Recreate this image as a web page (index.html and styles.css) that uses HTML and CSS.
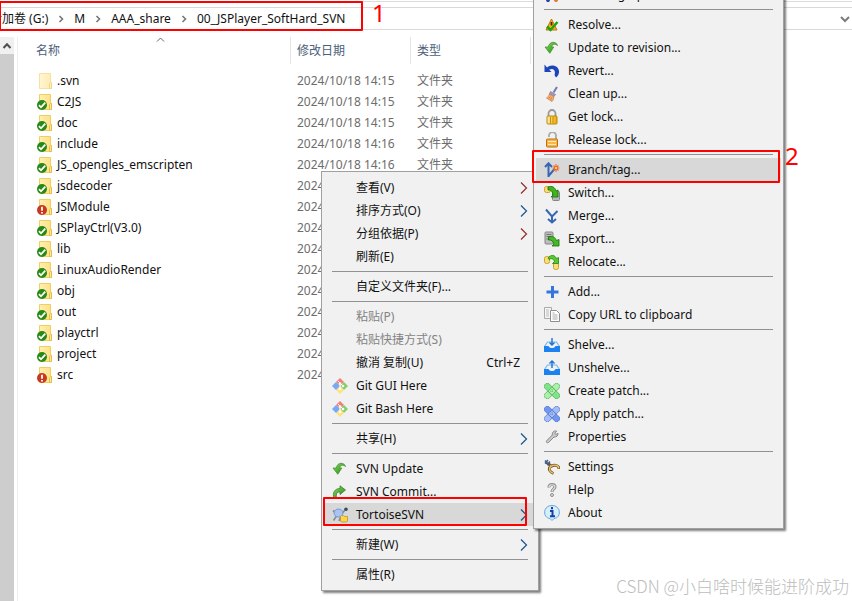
FILE: index.html
```html
<!DOCTYPE html>
<html lang="zh-CN">
<head>
  <meta charset="UTF-8">
  <meta name="viewport" content="width=device-width, initial-scale=1.0">
  <title>00_JSPlayer_SoftHard_SVN</title>
  <link rel="stylesheet" href="styles.css">
</head>
<body>
  <svg class="sprite" aria-hidden="true">
    <defs>
      <linearGradient id="gold" x1="0" x2="1"><stop offset="0" stop-color="#fff0b0"/><stop offset="1" stop-color="#eda800"/></linearGradient>
      <linearGradient id="greenFill" x1="0" y1="0" x2="1" y2="1"><stop offset="0" stop-color="#8ce05a"/><stop offset="1" stop-color="#16850c"/></linearGradient>
      <linearGradient id="folderFill" x1="0" x2="1"><stop offset="0" stop-color="#fff0b4"/><stop offset="1" stop-color="#ffdf80"/></linearGradient>
    </defs>
    <symbol id="folder" viewBox="0 0 16 16">
      <path d="M2.5.5h11v9h1v6h-12z" fill="url(#folderFill)" stroke="#efcf62"/>
      <path d="M12.5 15.5v-5l1-1h1v6z" fill="#ffe9a0" stroke="#e5bc45"/>
    </symbol>
    <symbol id="ok" viewBox="0 0 10 10">
      <circle cx="5" cy="5" r="5" fill="#278a16"/>
      <path d="M2 5.2l2 2.1L8.3 2.6" fill="none" stroke="#fff" stroke-width="1.8"/>
    </symbol>
    <symbol id="modified" viewBox="0 0 10 10">
      <circle cx="5" cy="5" r="5" fill="#c8371f"/>
      <path d="M5 1.8v4M5 6.9v1.5" stroke="#fff" stroke-width="1.8"/>
    </symbol>
    <symbol id="crumb" viewBox="0 0 6 8"><path d="M1.5 1l3 3-3 3" fill="none" stroke="#777" stroke-width="1.6"/></symbol>
    <symbol id="arrow" viewBox="0 0 8 12"><path d="M1 .5L6.500 6 1 11.500" fill="none" stroke="currentColor" stroke-width="1.200"/></symbol>

    <symbol id="git" viewBox="0 0 16 16">
      <path d="M8 0l4 4-4 4-4-4z" fill="#f47f7a"/>
      <path d="M12 4l4 4-4 4-4-4z" fill="#86cf68"/>
      <path d="M8 8l4 4-4 4-4-4z" fill="#ffe27c"/>
      <path d="M4 4l4 4-4 4-4-4z" fill="#79a8f5"/>
      <path d="M6 3l5 5M8 5.500v6" stroke="#fff" fill="none"/>
      <circle cx="8" cy="5.500" r="1.300" fill="#fff"/><circle cx="11" cy="8" r="1.300" fill="#fff"/><circle cx="8" cy="11" r="1.300" fill="#fff"/>
    </symbol>
    <symbol id="update" viewBox="0 0 16 16">
      <path d="M13.500 5.500C12.500 1.500 5.500.5 4.300 7H1l4.800 6.300L9.800 7H7.600c.5-2.800 3.200-3.800 5.900-1.500z" fill="url(#greenFill)" stroke="#4a8f3c" stroke-width=".8"/>
    </symbol>
    <symbol id="commit" viewBox="0 0 16 16">
      <path d="M2 14.500C0 8.500 3 4.500 8 4.500V1.800L13.500 6 8 10.600V8C5 7.500 3.800 10 4.500 13.500z" fill="url(#greenFill)" stroke="#46793f" stroke-width=".8"/>
    </symbol>
    <symbol id="tortoise" viewBox="0 0 16 16">
      <path d="M10 6.500l3-3.500M4.500 9l-3 4.500M1 3.500L4 6M9 9l-2 5" stroke="#8b9099" stroke-width="1.800"/>
      <circle cx="14" cy="2.300" r="1.800" fill="#33505f"/>
      <ellipse cx="6.500" cy="6" rx="4.400" ry="4" fill="#a8c4f5" stroke="#7496d8"/>
      <path d="M8.500 9.500l1-1h2l1 1h3v4.500l-1 1h-5l-1-1z" fill="#f8d64f" stroke="#c19322" stroke-width=".8"/>
    </symbol>

    <symbol id="graph" viewBox="0 0 16 16">
      <path d="M4 1v14M4 10l7-5" stroke="#2c4fa5" stroke-width="2"/>
      <circle cx="12" cy="13" r="2" fill="#e8722c"/><circle cx="4" cy="13" r="2" fill="#2c3fa5"/>
    </symbol>
    <symbol id="resolve" viewBox="0 0 16 16">
      <path d="M7.500 2l5.500 11H2z" fill="#f6b51c" stroke="#c9700d"/>
      <path d="M7.500 5v3.500" stroke="#4a2a00" stroke-width="1.800"/>
      <path d="M3 9.500l3.500 3.500L13.500 5" fill="none" stroke="#1ea30f" stroke-width="2.500"/>
    </symbol>
    <symbol id="revert" viewBox="0 0 16 16">
      <path d="M.5 1.500v7.500h7L5.200 6.700c3.300-2 7-.2 5.300 5.300l1.500 2.500C17.500 10 15 3 9 2.500 6.500 2.300 4.500 3 3 4.500z" fill="#1d45ba"/>
    </symbol>
    <symbol id="clean" viewBox="0 0 16 16">
      <path d="M13 1L9.500 6.500" stroke="#7777a8" stroke-width="2"/>
      <path d="M6.500 5.500l5 3-1.500 2-4.500-2.500z" fill="#9a9dc5" stroke="#7377a5" stroke-width=".7"/>
      <path d="M5.300 8l4.500 2.500c0 2-.5 3.500-1.800 5L2.500 12C4 11 5 10 5.300 8z" fill="#f3b16c" stroke="#c97535" stroke-width=".7"/>
      <path d="M4.500 12.500l2-2M6.500 13.800l1.500-2.500" stroke="#db6640" stroke-width=".8"/>
    </symbol>
    <symbol id="lock" viewBox="0 0 16 16">
      <path d="M4.500 8V4.500a3.500 3.500 0 0 1 7 0V8" fill="none" stroke="#999" stroke-width="1.800"/>
      <rect x="3" y="7" width="10" height="8" rx="1" fill="url(#gold)" stroke="#b58709"/>
      <path d="M6.500 8v6.500M9 8v6.500" stroke="#c98d00"/>
    </symbol>
    <symbol id="unlock" viewBox="0 0 16 16">
      <path d="M5 5V3.500a3.500 3.500 0 0 1 7 0V8" fill="none" stroke="#aaa" stroke-width="1.800"/>
      <rect x="2.500" y="7" width="11" height="8" rx="1" fill="#f8b54a" stroke="#bd6e0e"/>
      <path d="M4 9.500h8M4 12.500h8" stroke="#ffe8b8"/>
    </symbol>
    <symbol id="branch" viewBox="0 0 16 16">
      <path d="M4.500 15V2M1 5l3.500-3.700L8 5M4.500 14l6-7" fill="none" stroke="#3767b2" stroke-width="2"/>
      <path d="M12 2v8M8.500 6h7M9.500 3.500l5 5M14.500 3.500l-5 5" stroke="#ef6b34" stroke-width="1.100"/>
      <circle cx="12" cy="6" r="1.700" fill="#ffd34d" stroke="#e9582b" stroke-width=".8"/>
    </symbol>
    <symbol id="switch" viewBox="0 0 16 16">
      <rect x=".5" y="1.500" width="6" height="6" rx="2" fill="#f9df75" stroke="#c7a32b"/>
      <rect x="8.500" y="6.500" width="7" height="9" rx="1" fill="#b9b9b9" stroke="#858585"/>
      <path d="M4 2c4-1.500 7 0 8 4l2-1v7H7l2-2C8.500 6.500 7 4.500 4 5z" fill="#3fb51f" stroke="#176c08" stroke-width=".8"/>
    </symbol>
    <symbol id="merge" viewBox="0 0 16 16">
      <path d="M2 1.500l6 7L13.500 3M8 8v6M4 11l4 3.500 4-3.500" fill="none" stroke="#3767b2" stroke-width="2"/>
    </symbol>
    <symbol id="export" viewBox="0 0 16 16">
      <rect x="1" y="1" width="8" height="12" rx="1" fill="#bdbdbd" stroke="#858585"/>
      <path d="M2.500 3.500h5M2.500 5.500h5M2.500 8h3" stroke="#747474"/>
      <path d="M4.500 6c4-1.500 7 .5 8 3.500l2.500-1v6.500H8l2-2C9.500 10.500 7.500 8.500 4.500 9z" fill="#43ba26" stroke="#176c08" stroke-width=".8"/>
    </symbol>
    <symbol id="relocate" viewBox="0 0 16 16">
      <rect x=".5" y="2.500" width="5" height="7" rx="2" fill="#f9df75" stroke="#c7a32b"/>
      <rect x="9.500" y="7.500" width="5" height="8" rx="2" fill="#f9df75" stroke="#c7a32b"/>
      <path d="M4 4c3-4 7-3 8.500.5l2-1v6H8.500l2-2C9.500 4.500 7 4 5 5.500z" fill="#55c832" stroke="#238412" stroke-width=".8"/>
    </symbol>
    <symbol id="add" viewBox="0 0 16 16"><path d="M8.500 2v12M2.500 8h12" stroke="#3476db" stroke-width="3"/></symbol>
    <symbol id="copy" viewBox="0 0 16 16">
      <path d="M.5.500h7v11h-7z" fill="#f6f6f6" stroke="#aaa"/>
      <path d="M2 3h3M2 5h3M2 7h3M2 9h3" stroke="#bbb"/>
      <path d="M6.500 3.500h6l3 3v8h-9z" fill="#fff" stroke="#8e8e8e"/>
      <path d="M8.500 6h2M8.500 8h5M8.500 10h5M8.500 12h5" stroke="#aaa"/>
    </symbol>
    <symbol id="shelve" viewBox="0 0 16 16">
      <path d="M.5 9.500L3.500 5h9l3 4.500" fill="none" stroke="#79b7ee" stroke-width="1.200"/>
      <path d="M0 9h4.500c1 2.800 6 2.800 7 0H16v6H0z" fill="#1b82f0"/>
      <path d="M8 1v7M5.500 5.500L8 8l2.500-2.500" fill="none" stroke="#1b73d2" stroke-width="1.400"/>
    </symbol>
    <symbol id="unshelve" viewBox="0 0 16 16">
      <path d="M.5 9.500L3.500 5h9l3 4.500" fill="none" stroke="#79b7ee" stroke-width="1.200"/>
      <path d="M0 9h4.500c1 2.800 6 2.800 7 0H16v6H0z" fill="#1b82f0"/>
      <path d="M8 8V1M5.500 3.500L8 1l2.500 2.500" fill="none" stroke="#1b73d2" stroke-width="1.400"/>
    </symbol>
    <symbol id="patch" viewBox="0 0 16 16">
      <g stroke="currentColor" stroke-width=".7">
        <rect x="-1.500" y="5" width="19" height="6" rx="2" transform="rotate(-45 8 8)" fill="var(--patch-light)"/>
        <rect x="-1.500" y="5" width="19" height="6" rx="2" transform="rotate(45 8 8)" fill="var(--patch)"/>
        <path d="M8 4l4 4-4 4-4-4z" fill="var(--patch-light)"/>
        <path d="M8 6v4M6 8h4" stroke-dasharray="1 1"/>
      </g>
    </symbol>
    <symbol id="wrench" viewBox="0 0 16 16">
      <path d="M9.500 2.500c1.300-.8 2.500-.7 3.200-.4L10.800 4l1 1.500 2.200-1.200c.2 2.500-1.500 4-4 3.700l-5.500 5.500c-1.300 1-2.800-.5-1.800-1.800L8.300 6c-.2-1.500.3-2.700 1.200-3.500z" fill="#c9c9c9" stroke="#8b8b8b"/>
    </symbol>
    <symbol id="settings" viewBox="0 0 16 16">
      <path d="M4.500 4.500L7 7.500c4-2.500 8-1 8 2.500M6.500 7c-2.500 3-1 6 3 7.500" fill="none" stroke="#7a571d" stroke-width="2.800"/>
      <path d="M6 6.500L7 7.500c4-2.500 7.800-1 7.800 2M6.500 7.500c-2.300 3-.8 5.200 2.500 6.700" fill="none" stroke="#e9c57d" stroke-width="1.300"/>
      <path d="M1 1.500l4 4.500M1 4.500l3-3.500M3 6l3-3.500" stroke="#455c84" stroke-width="1.500"/>
    </symbol>
    <symbol id="help" viewBox="0 0 16 16">
      <path d="M5 5.500C4.500 1.500 11.500 1.500 11 5c-.2 2-3 2-3 5" fill="none" stroke="#8e8e8e" stroke-width="3"/>
      <path d="M5 5.200C5 2 11 2 11 5c-.2 2-3 2-3 4.700" fill="none" stroke="#e6e6e6" stroke-width="1.100"/>
      <circle cx="8" cy="13" r="1.500" fill="#ddd" stroke="#8e8e8e"/>
    </symbol>
    <symbol id="about" viewBox="0 0 16 16">
      <path d="M8 .5c9.500 0 9.500 12.500 2 13L8 15.500 6 13.500C-1.500 13-1.500.5 8 .5z" fill="#d6edfc" stroke="#6ba5d6"/>
      <path d="M8 2v2.300M6 6h2.500v5M6 11.200h5" fill="none" stroke="#163fa5" stroke-width="2"/>
    </symbol>
  </svg>

  <header class="topbar">
    <nav class="address">
      <a href="#">新加卷 (G:)</a>
      <svg class="crumb"><use href="#crumb"/></svg>
      <a href="#">M</a>
      <svg class="crumb"><use href="#crumb"/></svg>
      <a href="#">AAA_share</a>
      <svg class="crumb"><use href="#crumb"/></svg>
      <a href="#">00_JSPlayer_SoftHard_SVN</a>
      <button class="history" aria-label="以前的位置">
        <svg viewBox="0 0 10 8"><path d="M1 2l4 4 4-4" fill="none" stroke="#7c7c7c" stroke-width="2"/></svg>
      </button>
    </nav>
  </header>

  <main class="explorer">
    <div class="scrollbar">
      <button class="scroll-up" aria-label="向上滚动">
        <svg viewBox="0 0 10 8"><path d="M1.500 6L5 2.200 8.500 6" fill="none" stroke="#505050" stroke-width="2"/></svg>
      </button>
    </div>
    <div class="content">
      <table class="files">
        <thead>
          <tr>
            <th class="col-name">名称<svg class="sort" viewBox="0 0 9 5"><path d="M1 4.500L4.500 1 8 4.500" fill="none" stroke="#666"/></svg></th>
            <th class="col-date">修改日期</th>
            <th class="col-type">类型</th>
          </tr>
        </thead>
        <tbody id="fileRows"></tbody>
      </table>
    </div>
  </main>

  <ul class="menu context-menu">
    <li><button>查看(V)<svg class="arrow red"><use href="#arrow"/></svg></button></li>
    <li><button>排序方式(O)<svg class="arrow"><use href="#arrow"/></svg></button></li>
    <li><button>分组依据(P)<svg class="arrow red"><use href="#arrow"/></svg></button></li>
    <li><button>刷新(E)</button></li>
    <li class="separator"></li>
    <li><button>自定义文件夹(F)...</button></li>
    <li class="separator"></li>
    <li><button disabled>粘贴(P)</button></li>
    <li><button disabled>粘贴快捷方式(S)</button></li>
    <li><button>撤消 复制(U)<span class="shortcut">Ctrl+Z</span></button></li>
    <li><button><svg class="icon"><use href="#git"/></svg>Git GUI Here</button></li>
    <li><button><svg class="icon"><use href="#git"/></svg>Git Bash Here</button></li>
    <li class="separator"></li>
    <li><button>共享(H)<svg class="arrow"><use href="#arrow"/></svg></button></li>
    <li class="separator"></li>
    <li><button><svg class="icon"><use href="#update"/></svg>SVN Update</button></li>
    <li><button><svg class="icon"><use href="#commit"/></svg>SVN Commit...</button></li>
    <li><button class="active"><svg class="icon"><use href="#tortoise"/></svg>TortoiseSVN<svg class="arrow"><use href="#arrow"/></svg></button></li>
    <li class="separator"></li>
    <li><button>新建(W)<svg class="arrow"><use href="#arrow"/></svg></button></li>
    <li class="separator"></li>
    <li><button>属性(R)</button></li>
  </ul>

  <ul class="menu svn-menu">
    <li><button><svg class="icon"><use href="#graph"/></svg>Revision graph</button></li>
    <li class="separator"></li>
    <li><button><svg class="icon"><use href="#resolve"/></svg>Resolve...</button></li>
    <li><button><svg class="icon"><use href="#update"/></svg>Update to revision...</button></li>
    <li><button><svg class="icon"><use href="#revert"/></svg>Revert...</button></li>
    <li><button><svg class="icon"><use href="#clean"/></svg>Clean up...</button></li>
    <li><button><svg class="icon"><use href="#lock"/></svg>Get lock...</button></li>
    <li><button><svg class="icon"><use href="#unlock"/></svg>Release lock...</button></li>
    <li class="separator"></li>
    <li><button class="active"><svg class="icon"><use href="#branch"/></svg>Branch/tag...</button></li>
    <li><button><svg class="icon"><use href="#switch"/></svg>Switch...</button></li>
    <li><button><svg class="icon"><use href="#merge"/></svg>Merge...</button></li>
    <li><button><svg class="icon"><use href="#export"/></svg>Export...</button></li>
    <li><button><svg class="icon"><use href="#relocate"/></svg>Relocate...</button></li>
    <li class="separator"></li>
    <li><button><svg class="icon"><use href="#add"/></svg>Add...</button></li>
    <li><button><svg class="icon"><use href="#copy"/></svg>Copy URL to clipboard</button></li>
    <li class="separator"></li>
    <li><button><svg class="icon"><use href="#shelve"/></svg>Shelve...</button></li>
    <li><button><svg class="icon"><use href="#unshelve"/></svg>Unshelve...</button></li>
    <li><button><svg class="icon patch-green"><use href="#patch"/></svg>Create patch...</button></li>
    <li><button><svg class="icon patch-blue"><use href="#patch"/></svg>Apply patch...</button></li>
    <li><button><svg class="icon"><use href="#wrench"/></svg>Properties</button></li>
    <li class="separator"></li>
    <li><button><svg class="icon"><use href="#settings"/></svg>Settings</button></li>
    <li><button><svg class="icon"><use href="#help"/></svg>Help</button></li>
    <li><button><svg class="icon"><use href="#about"/></svg>About</button></li>
  </ul>

  <div class="mark mark-path"></div>
  <div class="mark mark-tortoise"></div>
  <div class="mark mark-branch"></div>
  <span class="step step-one">1</span>
  <span class="step step-two">2</span>
  <div class="watermark">CSDN @小白啥时候能进阶成功</div>

  <script>
    const files = [
      ['.svn', '', '14:15'],
      ['C2JS', 'ok', '14:15'],
      ['doc', 'ok', '14:15'],
      ['include', 'ok', '14:16'],
      ['JS_opengles_emscripten', 'ok', '14:16'],
      ['jsdecoder', 'ok', '14:16'],
      ['JSModule', 'modified', '14:16'],
      ['JSPlayCtrl(V3.0)', 'ok', '14:16'],
      ['lib', 'ok', '14:16'],
      ['LinuxAudioRender', 'ok', '14:16'],
      ['obj', 'ok', '14:16'],
      ['out', 'ok', '14:16'],
      ['playctrl', 'ok', '14:16'],
      ['project', 'ok', '14:16'],
      ['src', 'modified', '14:16']
    ];

    document.getElementById('fileRows').innerHTML = files.map(([name, status, time]) => `
      <tr>
        <td><div class="file">
          <svg class="file-icon ${status ? '' : 'hidden-file'}" viewBox="0 0 16 16">
            <use href="#folder" width="16" height="16"/>
            ${status ? `<use href="#${status}" y="6" width="10" height="10"/>` : ''}
          </svg>${name}
        </div></td>
        <td class="info">2024/10/18 ${time}</td>
        <td class="info">文件夹</td>
      </tr>`).join('');
  </script>
</body>
</html>
```
FILE: styles.css
```css
* {
  box-sizing: border-box;
}

body {
  position: relative;
  display: flex;
  flex-direction: column;
  min-height: 100vh;
  margin: 0;
  overflow: hidden;
  background: #fff;
  color: #111;
  font-family: "Noto Sans", "Noto Sans CJK SC", sans-serif;
  font-size: 12px;
  line-height: 20px;
}

button {
  border: 0;
  padding: 0;
  background: none;
  color: inherit;
  font: inherit;
}

.sprite {
  position: absolute;
  width: 0;
  height: 0;
}

/* address bar */
.topbar {
  margin-top: 1px;
  padding-top: 5px;
  border-top: 1px solid #dcdcdc;
}

.address {
  display: flex;
  align-items: center;
  height: 23px;
  margin-left: -10px;
  padding-right: 2px;
  border-top: 1px solid #d9d9d9;
  border-bottom: 1px solid #d9d9d9;
}

.address a {
  color: #111;
  text-decoration: none;
  white-space: nowrap;
}

.crumb {
  flex: none;
  width: 6px;
  height: 8px;
  margin: 0 10px;
}

.history {
  display: flex;
  margin-left: auto;
}

.history svg {
  width: 10px;
  height: 8px;
}

/* file list */
.explorer {
  display: flex;
  flex: 1;
  margin-top: 7px;
}

.scrollbar {
  width: 14px;
  background: #cdcdcd;
}

.scroll-up {
  display: flex;
  align-items: center;
  justify-content: center;
  width: 100%;
  height: 17px;
  background: #f0f0f0;
}

.scroll-up svg {
  width: 10px;
  height: 8px;
}

.content {
  flex: 1;
  margin-left: 3px;
  padding-left: 12px;
  border-left: 1px solid #f0f0f0;
}

.files {
  table-layout: fixed;
  width: 501px;
  border-collapse: separate;
  border-spacing: 0;
}

.files th {
  position: relative;
  height: 27px;
  padding: 0 6px;
  border-right: 1px solid #e5e5e5;
  color: #4c607a;
  font-weight: normal;
  text-align: left;
}

.col-name {
  width: 261px;
}

.col-date,
.col-type {
  width: 120px;
}

.sort {
  position: absolute;
  top: 0;
  left: calc(50% - 4px);
  width: 9px;
  height: 5px;
}

.files tbody::before {
  content: "";
  display: block;
  height: 6px;
}

.files td {
  height: 21px;
  padding: 0 6px;
  white-space: nowrap;
}

.files .info {
  color: #6d6d6d;
}

.file {
  display: flex;
  align-items: center;
  gap: 4px;
  padding-left: 1px;
}

.file-icon {
  width: 16px;
  height: 16px;
}

.hidden-file {
  opacity: 0.6;
}

/* menus */
.menu {
  position: absolute;
  margin: 0;
  padding: 4px 2px;
  border: 1px solid #a0a0a0;
  background: #f1f1f1;
  box-shadow: 2px 2px 2px rgba(0, 0, 0, 0.5);
  list-style: none;
}

.context-menu {
  top: 171px;
  left: 321px;
  width: 218px;
}

/* opens upwards, the first entries run off the top edge */
.svn-menu {
  top: -22px;
  left: 533px;
  width: 251px;
}

.menu button {
  display: flex;
  align-items: center;
  position: relative;
  width: 100%;
  height: 23px;
  padding: 0 8px 0 32px;
  text-align: left;
  white-space: nowrap;
}

.menu button:hover,
.menu .active {
  background: #d8d8d8;
}

.menu button:disabled {
  color: #838383;
}

.menu .icon {
  position: absolute;
  left: 8px;
  width: 16px;
  height: 16px;
}

.arrow {
  width: 8px;
  height: 12px;
  margin-left: auto;
  color: #17558f;
}

.arrow.red {
  color: #8f2f2a;
}

.shortcut {
  margin-left: auto;
  padding-right: 8px;
}

.separator {
  height: 1px;
  margin: 3px 8px;
  background: #919191;
}

.patch-green {
  --patch: #7ee486;
  --patch-light: #a9f0a8;
  color: #57a85d;
}

.patch-blue {
  --patch: #6e96f5;
  --patch-light: #a3bdfb;
  color: #5873bb;
}

/* red annotations */
.mark {
  position: absolute;
  border: 2px solid #f00;
  border-radius: 1px;
  pointer-events: none;
}

.mark-path {
  top: 1px;
  left: -1px;
  width: 364px;
  height: 30px;
}

.mark-tortoise {
  top: 497px;
  left: 323px;
  width: 204px;
  height: 29px;
}

.mark-branch {
  top: 150px;
  left: 532px;
  width: 248px;
  height: 33px;
}

.step {
  position: absolute;
  color: #f00;
  font-size: 24px;
  line-height: 24px;
}

.step-one {
  top: 1px;
  left: 372px;
}

.step-two {
  top: 144px;
  left: 785px;
}

.watermark {
  position: absolute;
  right: 3px;
  bottom: 3px;
  color: #bdbdbd;
  font-family: "Noto Sans CJK SC", sans-serif;
  font-size: 17px;
  font-weight: 300;
  line-height: 24px;
}
```
